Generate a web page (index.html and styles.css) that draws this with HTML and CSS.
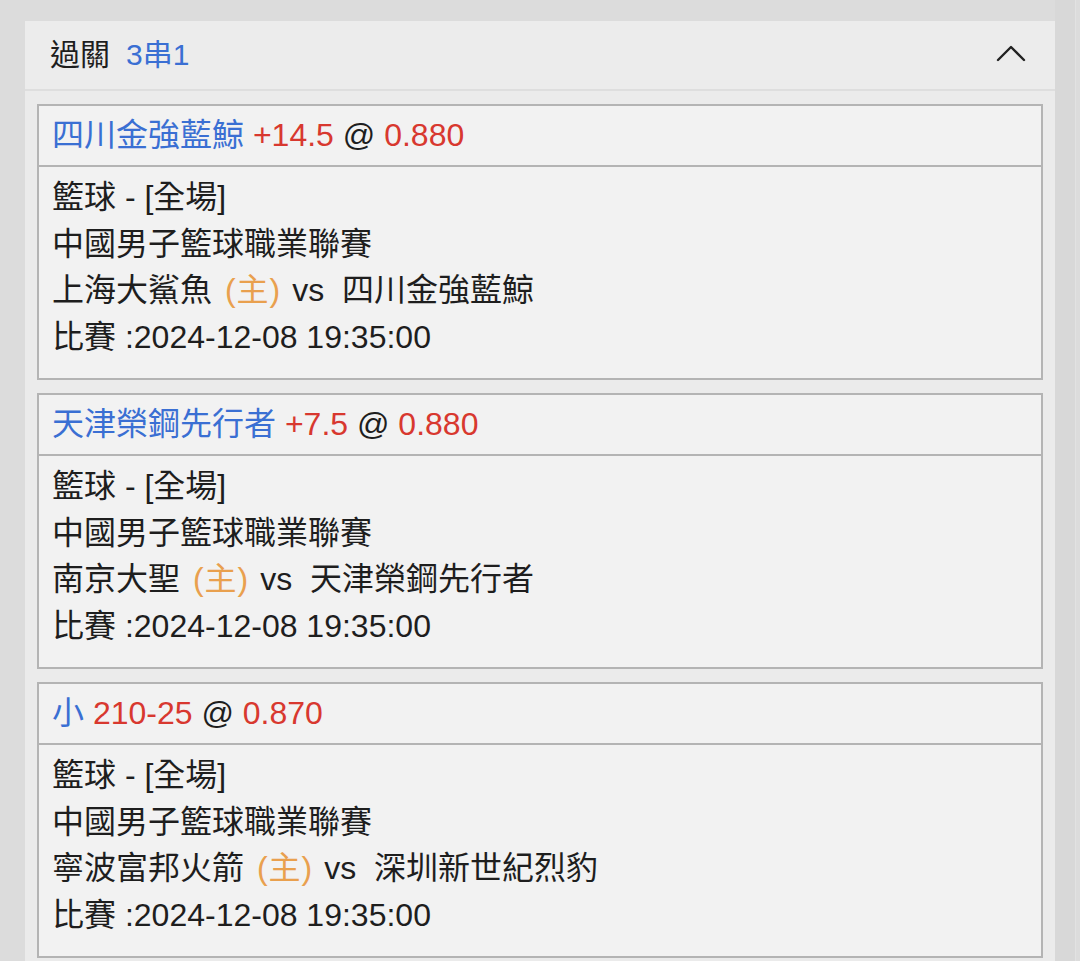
FILE: index.html
```html
<!DOCTYPE html>
<html lang="zh-Hant">
<head>
<meta charset="utf-8">
<link rel="stylesheet" href="styles.css">
</head>
<body>
<div class="page">
  <div class="panel">
    <div class="panel-head">
      <div class="head-title">過關<span class="blue head-count">3串1</span></div>
      <svg class="chev" width="30" height="18" viewBox="0 0 30 18"><path d="M2 16 L15 3 L28 16" fill="none" stroke="#222" stroke-width="2.4" stroke-linecap="round" stroke-linejoin="round"/></svg>
    </div>
    <div class="panel-body">
      <div class="card">
        <div class="card-title"><span class="blue">四川金強藍鯨</span> <span class="red">+14.5</span> @ <span class="red">0.880</span></div>
        <div class="card-body">
          <div class="line">籃球 - [全場]</div>
          <div class="line">中國男子籃球職業聯賽</div>
          <div class="line">上海大鯊魚 <span class="orange">(主)</span> vs&nbsp; 四川金強藍鯨</div>
          <div class="line">比賽 :2024-12-08 19:35:00</div>
        </div>
      </div>
      <div class="card">
        <div class="card-title"><span class="blue">天津榮鋼先行者</span> <span class="red">+7.5</span> @ <span class="red">0.880</span></div>
        <div class="card-body">
          <div class="line">籃球 - [全場]</div>
          <div class="line">中國男子籃球職業聯賽</div>
          <div class="line">南京大聖 <span class="orange">(主)</span> vs&nbsp; 天津榮鋼先行者</div>
          <div class="line">比賽 :2024-12-08 19:35:00</div>
        </div>
      </div>
      <div class="card">
        <div class="card-title"><span class="blue">小</span> <span class="red">210-25</span> @ <span class="red">0.870</span></div>
        <div class="card-body">
          <div class="line">籃球 - [全場]</div>
          <div class="line">中國男子籃球職業聯賽</div>
          <div class="line">寧波富邦火箭 <span class="orange">(主)</span> vs&nbsp; 深圳新世紀烈豹</div>
          <div class="line">比賽 :2024-12-08 19:35:00</div>
        </div>
      </div>
    </div>
  </div>
  <div class="rail"></div>
</div>
</body>
</html>
```

FILE: styles.css
```css
html, body {
  margin: 0;
  padding: 0;
  background: #dcdcdc;
  height: 961px;
  overflow: hidden;
}
body {
  font-family: "Liberation Sans", "Noto Sans CJK TC", sans-serif;
  color: #1e1e1e;
}
.page {
  display: flex;
  padding: 21px 0 0 25px;
}
.panel {
  width: 1030px;
  background: #ebebeb;
}
.rail {
  width: 20px;
  background: #d8d8d8;
  border-right: 1px solid #e2e2e2;
  height: 961px;
  margin-top: -21px;
}
.panel-head {
  height: 68px;
  display: flex;
  align-items: center;
  justify-content: space-between;
  padding: 0 29px 0 25px;
  border-bottom: 2px solid #dedede;
  background: #ececec;
}
.head-title {
  font-size: 30px;
  line-height: 40px;
}
.head-count {
  margin-left: 16px;
}
.chev {
  display: block;
  margin-top: -4px;
}
.blue { color: #3a6fd3; }
.red { color: #d8382f; }
.orange { color: #e9a04e; }
.line .orange {
  margin: 0 2px 0 4px;
  letter-spacing: 1px;
}
.panel-body {
  padding: 13px 12px 0 12px;
  display: flex;
  flex-direction: column;
  gap: 13px;
}
.card {
  border: 2px solid #b4b4b4;
  background: #f2f2f2;
}
.card-title {
  height: 59px;
  line-height: 59px;
  padding-left: 13px;
  font-size: 32px;
  border-bottom: 2px solid #b4b4b4;
  white-space: pre;
}
.card-body {
  padding: 7px 13px 18px;
  font-size: 32px;
}
.line {
  line-height: 46.5px;
  height: 46.5px;
  white-space: pre;
}
```
